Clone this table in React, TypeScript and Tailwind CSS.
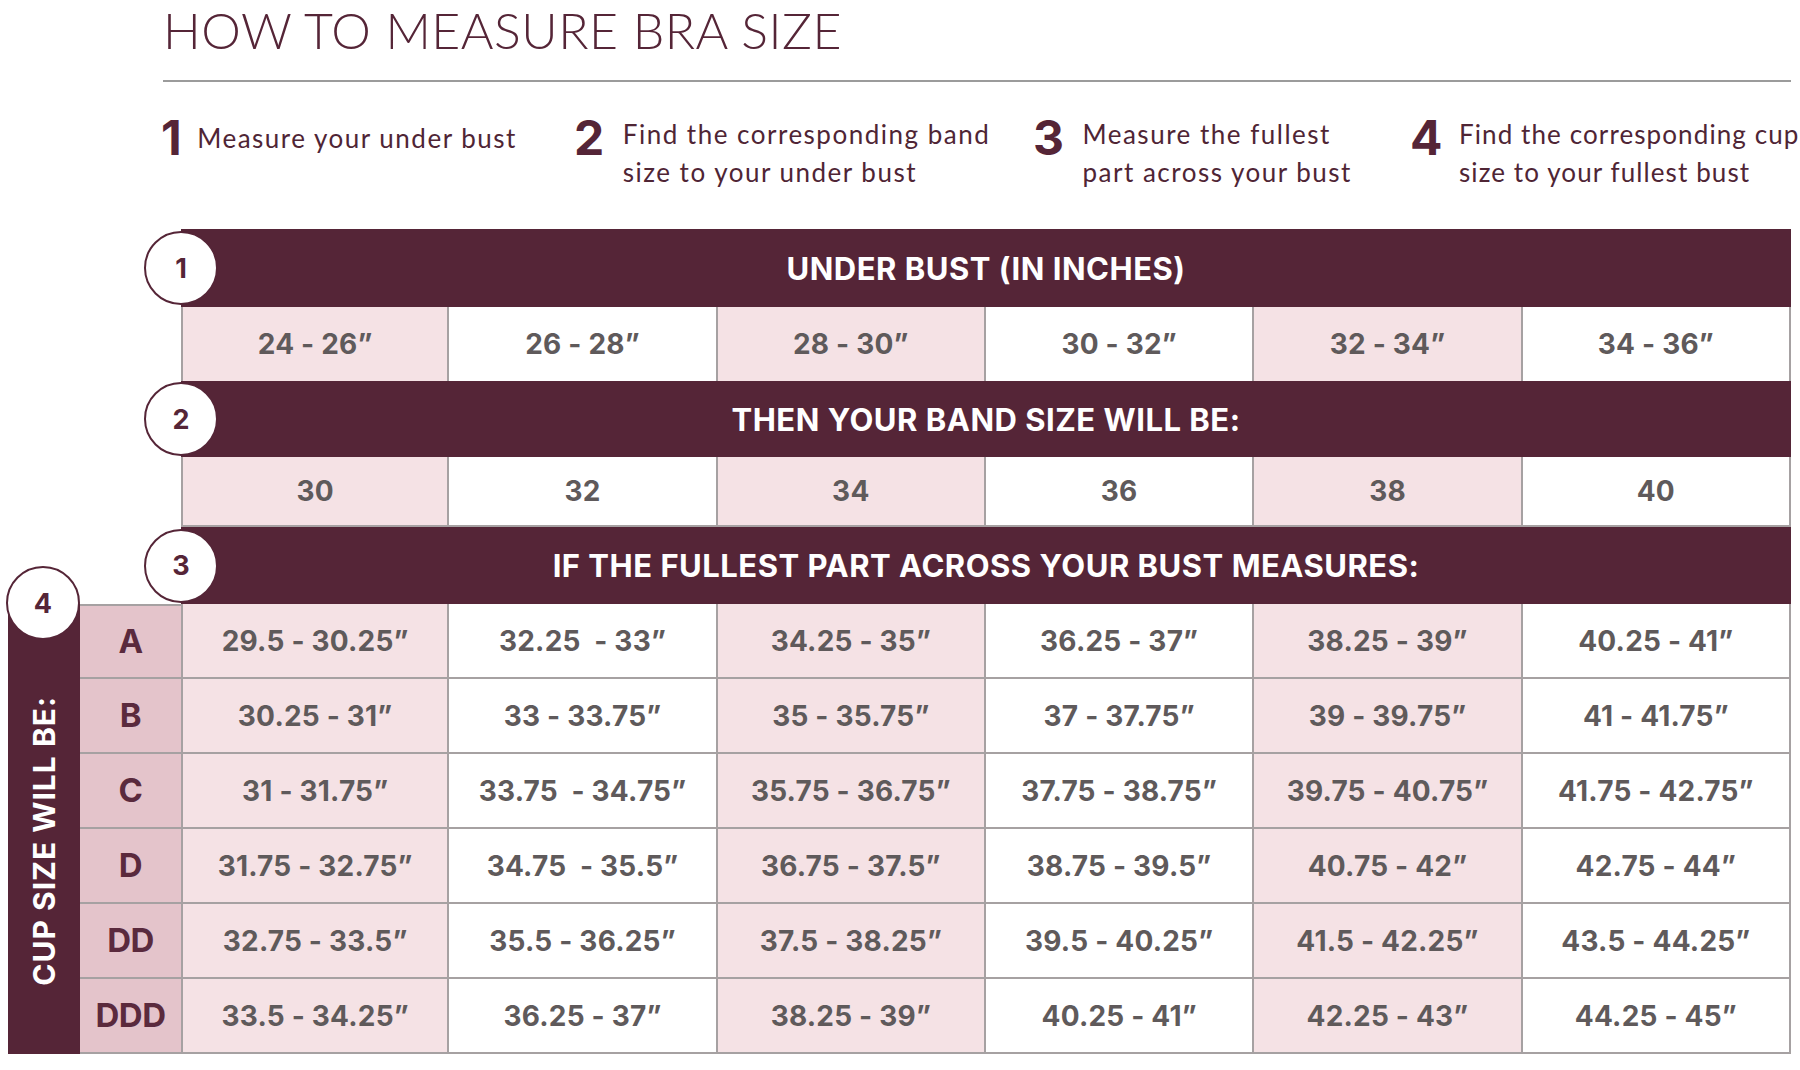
import React from "react";

const under = ["24 - 26”", "26 - 28”", "28 - 30”", "30 - 32”", "32 - 34”", "34 - 36”"];
const bands = ["30", "32", "34", "36", "38", "40"];
const cups: [string, string, string[]][] = [
  ["A", "row-start-6", ["29.5 - 30.25”", "32.25  - 33”", "34.25 - 35”", "36.25 - 37”", "38.25 - 39”", "40.25 - 41”"]],
  ["B", "row-start-7", ["30.25 - 31”", "33 - 33.75”", "35 - 35.75”", "37 - 37.75”", "39 - 39.75”", "41 - 41.75”"]],
  ["C", "row-start-8", ["31 - 31.75”", "33.75  - 34.75”", "35.75 - 36.75”", "37.75 - 38.75”", "39.75 - 40.75”", "41.75 - 42.75”"]],
  ["D", "row-start-9", ["31.75 - 32.75”", "34.75  - 35.5”", "36.75 - 37.5”", "38.75 - 39.5”", "40.75 - 42”", "42.75 - 44”"]],
  ["DD", "row-start-10", ["32.75 - 33.5”", "35.5 - 36.25”", "37.5 - 38.25”", "39.5 - 40.25”", "41.5 - 42.25”", "43.5 - 44.25”"]],
  ["DDD", "row-start-11", ["33.5 - 34.25”", "36.25 - 37”", "38.25 - 39”", "40.25 - 41”", "42.25 - 43”", "44.25 - 45”"]],
];

const INTER = { fontFamily: "Inter, 'Open Sans', sans-serif" };

function Circle({ n, className }: { n: string; className: string }) {
  return (
    <div
      style={INTER}
      className={
        "absolute w-[74px] h-[74px] rounded-full border-2 border-[#552537] bg-white flex items-center justify-center text-[27px] font-bold text-[#552537] leading-none z-10 " +
        className
      }
    >
      {n}
    </div>
  );
}

function Cell({ text, i, bottom }: { text: string; i: number; bottom?: boolean }) {
  const pink = i % 2 === 0;
  return (
    <div
      style={INTER}
      className={
        "flex items-center justify-center border-r-2 border-[#a6a1a2] text-[28px] font-bold text-[#5f5a5b] whitespace-pre tracking-[0.2px] " +
        (pink ? "bg-[#f5e2e5] " : "bg-white ") +
        (i === 0 ? "col-start-3 border-l-2 " : "") +
        (bottom ? "border-b-2 " : "")
      }
    >
      {text}
    </div>
  );
}

function Header({ n, text, row }: { n: string; text: string; row: string }) {
  return (
    <div className={"col-start-3 col-span-6 relative bg-[#552537] flex items-center justify-center " + row}>
      <Circle n={n} className="left-[-37px] top-1/2 -translate-y-1/2" />
      <span style={INTER} className="text-white font-bold text-[31px] tracking-[0.5px] leading-none">
        {text}
      </span>
    </div>
  );
}

function StepNum({ n, className = "" }: { n: string; className?: string }) {
  return (
    <div style={INTER} className={"text-[48px] font-bold leading-[38px] text-[#552537] mt-[-1px] shrink-0 " + className}>
      {n}
    </div>
  );
}

export default function App() {
  return (
    <div className="w-[1800px] h-[1070px] bg-white overflow-hidden" style={{ fontFamily: "Lato, 'Open Sans', sans-serif" }}>
      <div className="pl-[163px]">
        <h1 className="text-[50px] font-light leading-[60px] text-[#552537] tracking-[0.5px]">HOW TO MEASURE BRA SIZE</h1>
        <div className="h-[2px] bg-[#9b9b9b] mt-[20px] mr-[9px]" />
        <div className="flex mt-[38px] h-[109px] text-[#4f2535] text-[26px] leading-[38px] tracking-[1.5px]">
          <div className="w-[411px] shrink-0 flex gap-[14px]">
            <StepNum n="1" className="-ml-[2px]" />
            <div className="mt-[-1px]">Measure your under bust</div>
          </div>
          <div className="w-[459px] shrink-0 flex gap-[17px]">
            <StepNum n="2" />
            <div className="mt-[-5px]">
              Find the corresponding band
              <br />
              size to your under bust
            </div>
          </div>
          <div className="w-[377px] shrink-0 flex gap-[17px]">
            <StepNum n="3" />
            <div className="mt-[-5px]">
              Measure the fullest
              <br />
              part across your bust
            </div>
          </div>
          <div className="flex-1 min-w-0 flex gap-[15px]">
            <StepNum n="4" />
            <div className="mt-[-5px] whitespace-nowrap tracking-[1.1px]">
              Find the corresponding cup
              <br />
              size to your fullest bust
            </div>
          </div>
        </div>
      </div>

      <div className="pl-[8px] pr-[9px]">
        <div className="grid grid-cols-[72px_101px_repeat(6,minmax(0,1fr))] grid-rows-[78px_74px_76px_70px_77px_repeat(6,75px)]">
          <Header n="1" text="UNDER BUST (IN INCHES)" row="row-start-1" />
          {under.map((t, i) => (
            <Cell key={"u" + i} text={t} i={i} />
          ))}
          <Header n="2" text="THEN YOUR BAND SIZE WILL BE:" row="row-start-3" />
          {bands.map((t, i) => (
            <Cell key={"b" + i} text={t} i={i} bottom />
          ))}
          <Header n="3" text="IF THE FULLEST PART ACROSS YOUR BUST MEASURES:" row="row-start-5" />

          <div className="col-start-1 row-start-6 row-span-6 bg-[#552537] relative flex items-center justify-center pt-[24px]">
            <Circle n="4" className="left-[-2px] top-[-38px]" />
            <span
              style={INTER}
              className="[writing-mode:vertical-rl] rotate-180 text-white font-bold text-[30px] tracking-[1px] leading-none whitespace-nowrap"
            >
              CUP SIZE WILL BE:
            </span>
          </div>
          {cups.map(([letter, row, vals], r) => (
            <React.Fragment key={letter}>
              <div
                style={INTER}
                className={
                  "col-start-2 flex items-center justify-center bg-[#e4c4cb] border-b-2 border-[#a6a1a2] text-[33px] font-bold text-[#5a2a3d] tracking-[-0.5px] " +
                  row +
                  (r === 0 ? " border-t-2" : "")
                }
              >
                {letter}
              </div>
              {vals.map((v, i) => (
                <Cell key={letter + i} text={v} i={i} bottom />
              ))}
            </React.Fragment>
          ))}
        </div>
      </div>
    </div>
  );
}
